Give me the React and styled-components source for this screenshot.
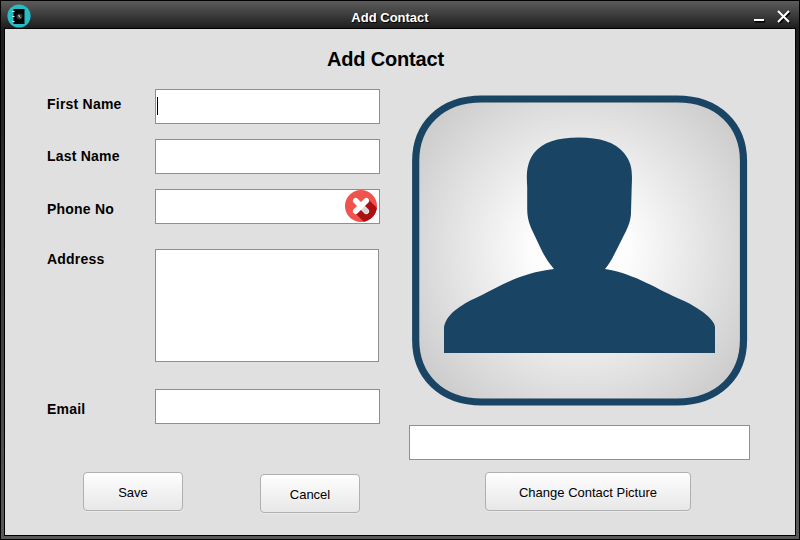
import React from "react";
import styled, { createGlobalStyle } from "styled-components";

const GlobalStyle = createGlobalStyle`
  * { box-sizing: border-box; }
  body { margin: 0; overflow: hidden; }
`;

const Window = styled.div`
  display: flex;
  flex-direction: column;
  width: 800px;
  height: 540px;
  padding: 0 3px 3px;
  border: 1px solid #000;
  background: linear-gradient(#5c5c5c 0, #1e1e1e 27px, #202020 60px, #595959 100%);
  font-family: "Liberation Sans", Arial, sans-serif;
  color: #000;
`;

const TitleBar = styled.header`
  display: grid;
  grid-template-columns: 60px 1fr 60px;
  align-items: center;
  flex: none;
  height: 27px;
  padding: 0 2px;
`;

const AppIcon = styled.svg`
  display: block;
  width: 24px;
  height: 24px;
  margin: 3px 0 0 0.5px;
`;

const WindowTitle = styled.div`
  padding: 5px 0 0 0;
  margin-left: -20px;
  text-align: center;
  font-size: 13px;
  line-height: 15px;
  font-weight: bold;
  color: #fff;
  text-shadow: 1px 1px 1px #000;
`;

const WindowControls = styled.svg`
  display: block;
  justify-self: end;
  width: 44px;
  height: 27px;
`;

const Panel = styled.main`
  display: flex;
  flex-direction: column;
  flex: 1;
  border: 1px solid #000;
  background: #e0e0e0;
`;

const Heading = styled.h1`
  margin: 18px 0 0 322px;
  height: 42px;
  font-size: 20px;
  line-height: 24px;
  font-weight: bold;
  letter-spacing: -0.18px;
`;

const Content = styled.div`
  display: grid;
  grid-template-columns: 333px 341px;
  column-gap: 29px;
  height: 371px;
  padding-left: 42px;
`;

const Form = styled.form`
  display: flex;
  flex-direction: column;
`;

const Row = styled.div`
  display: grid;
  grid-template-columns: 108px 225px;
  height: ${(p) => p.$height}px;
`;

const Label = styled.label`
  padding-top: ${(p) => p.$top}px;
  font-size: 14px;
  line-height: 16px;
  font-weight: bold;
  letter-spacing: 0.22px;
`;

const Field = styled.div`
  display: flex;
  align-items: center;
  justify-content: ${(p) => (p.$end ? "flex-end" : "flex-start")};
  width: ${(p) => p.$width || 225}px;
  height: ${(p) => p.$height || 35}px;
  padding: 0 1px;
  border: 1px solid #8f8f8f;
  background: #fff;
`;

const Caret = styled.span`
  width: 1px;
  height: 18px;
  margin-bottom: 1px;
  background: #000;
`;

const ErrorIcon = styled.svg`
  display: block;
  width: 33px;
  height: 33px;
`;

const PictureColumn = styled.section`
  display: flex;
  flex-direction: column;
  gap: 19px;
`;

const Picture = styled.svg`
  display: block;
  width: 336px;
  height: 311px;
  margin: 6px 0 0 3px;
`;

const Actions = styled.footer`
  display: flex;
  align-items: flex-start;
  padding: 12px 0 0 78px;
`;

const Button = styled.button`
  width: ${(p) => p.$width}px;
  height: 39px;
  margin: ${(p) => p.$top || 0}px ${(p) => p.$gap || 0}px 0 0;
  padding: 2px 0 0;
  border: 1px solid #b0b0b0;
  border-radius: 4px;
  background: linear-gradient(#fefefe, #e7e7e7);
  box-shadow: 0 1px 0 #e9e9e9;
  font: 13px/16px "Liberation Sans", Arial, sans-serif;
  color: #000;
`;

function ContactBookIcon() {
  return (
    <AppIcon viewBox="0 0 24 24">
      <circle cx="12" cy="12" r="11.6" fill="#27bdc5" />
      <path d="M6.5 5h11v15h-11z" fill="#000" />
      <path d="M5.5 7h2v1h-2zM5.5 12h2v1h-2zM5.5 17h2v1h-2z" fill="#fff" />
      <circle cx="12.5" cy="12.5" r="3" fill="#343434" />
      <path d="M12 11v1.2l1.3 1.5" fill="none" stroke="#fff" />
    </AppIcon>
  );
}

function InvalidIcon() {
  return (
    <ErrorIcon viewBox="0 0 33 33">
      <defs>
        <clipPath id="disc">
          <circle cx="16" cy="16" r="16" />
        </clipPath>
      </defs>
      <circle cx="16" cy="16" r="16" fill="#f0524d" />
      <path clipPath="url(#disc)" d="M23.5 9.5l12 12v14H22.5L9.5 22.5z" fill="#ac1013" />
      <path d="M10.7 10.7l10.6 10.6M21.3 10.7L10.7 21.3" stroke="#fff" strokeWidth="5.5" strokeLinecap="round" />
      <path d="M16.5 19.5l3-3 3.7 3.2a2.7 2.7 0 0 1-3.7 3.7z" fill="#d7d7d7" />
    </ErrorIcon>
  );
}

function ContactPicture() {
  return (
    <Picture viewBox="0 0 336 311">
      <defs>
        <radialGradient id="backdrop" gradientUnits="userSpaceOnUse" cx="168" cy="155" r="205">
          <stop offset="0" stopColor="#fff" />
          <stop offset="0.25" stopColor="#fcfcfc" />
          <stop offset="1" stopColor="#c9c9c9" />
        </radialGradient>
      </defs>
      <path
        d="M70 4H265C306 4 331.5 30 331.5 66V245C331.5 281 306 307 265 307H70C29 307 3.7 281 3.7 245V66C3.7 30 29 4 70 4Z"
        fill="url(#backdrop)"
        stroke="#194463"
        strokeWidth="7.2"
      />
      <path
        d="M167 42.5C188 42.5 203 47 212 58C220 68 220.5 76 219.7 92L219 117C219 124 217 131 212 140L205 154C200 164 198 168 193 174C224 179 246 195 270 205C294 216 303 227 303 232V258H32V232C35 218 50 209 70 200C92 189 109 178 142 174C136 167 133 162 129 154L120 135C116 126 115.2 120 115.2 113V92C114.5 80 114 69 122 58C131 47 145 42.5 167 42.5Z"
        fill="#194463"
      />
    </Picture>
  );
}

export default function App() {
  return (
    <>
      <GlobalStyle />
      <Window>
        <TitleBar>
          <ContactBookIcon />
          <WindowTitle>Add Contact</WindowTitle>
          <WindowControls viewBox="0 0 44 27">
            <path d="M5 20.5h10M29.5 11.5l10.5 10.5M40 11.5L29.5 22" stroke="#000" strokeWidth="2" />
            <path d="M4 19h10M28 10l11 11M39 10l-11 11" stroke="#fff" strokeWidth="2" />
          </WindowControls>
        </TitleBar>
        <Panel>
          <Heading>Add Contact</Heading>
          <Content>
            <Form>
              <Row $height={50}>
                <Label $top={7}>First Name</Label>
                <Field><Caret /></Field>
              </Row>
              <Row $height={50}>
                <Label $top={9}>Last Name</Label>
                <Field />
              </Row>
              <Row $height={60}>
                <Label $top={12}>Phone No</Label>
                <Field $end><InvalidIcon /></Field>
              </Row>
              <Row $height={140}>
                <Label $top={2}>Address</Label>
                <Field $width={224} $height={113} />
              </Row>
              <Row $height={35}>
                <Label $top={12}>Email</Label>
                <Field />
              </Row>
            </Form>
            <PictureColumn>
              <ContactPicture />
              <Field $width={341} />
            </PictureColumn>
          </Content>
          <Actions>
            <Button $width={100} $gap={77}>Save</Button>
            <Button $width={100} $gap={125} $top={2}>Cancel</Button>
            <Button $width={206}>Change Contact Picture</Button>
          </Actions>
        </Panel>
      </Window>
    </>
  );
}
